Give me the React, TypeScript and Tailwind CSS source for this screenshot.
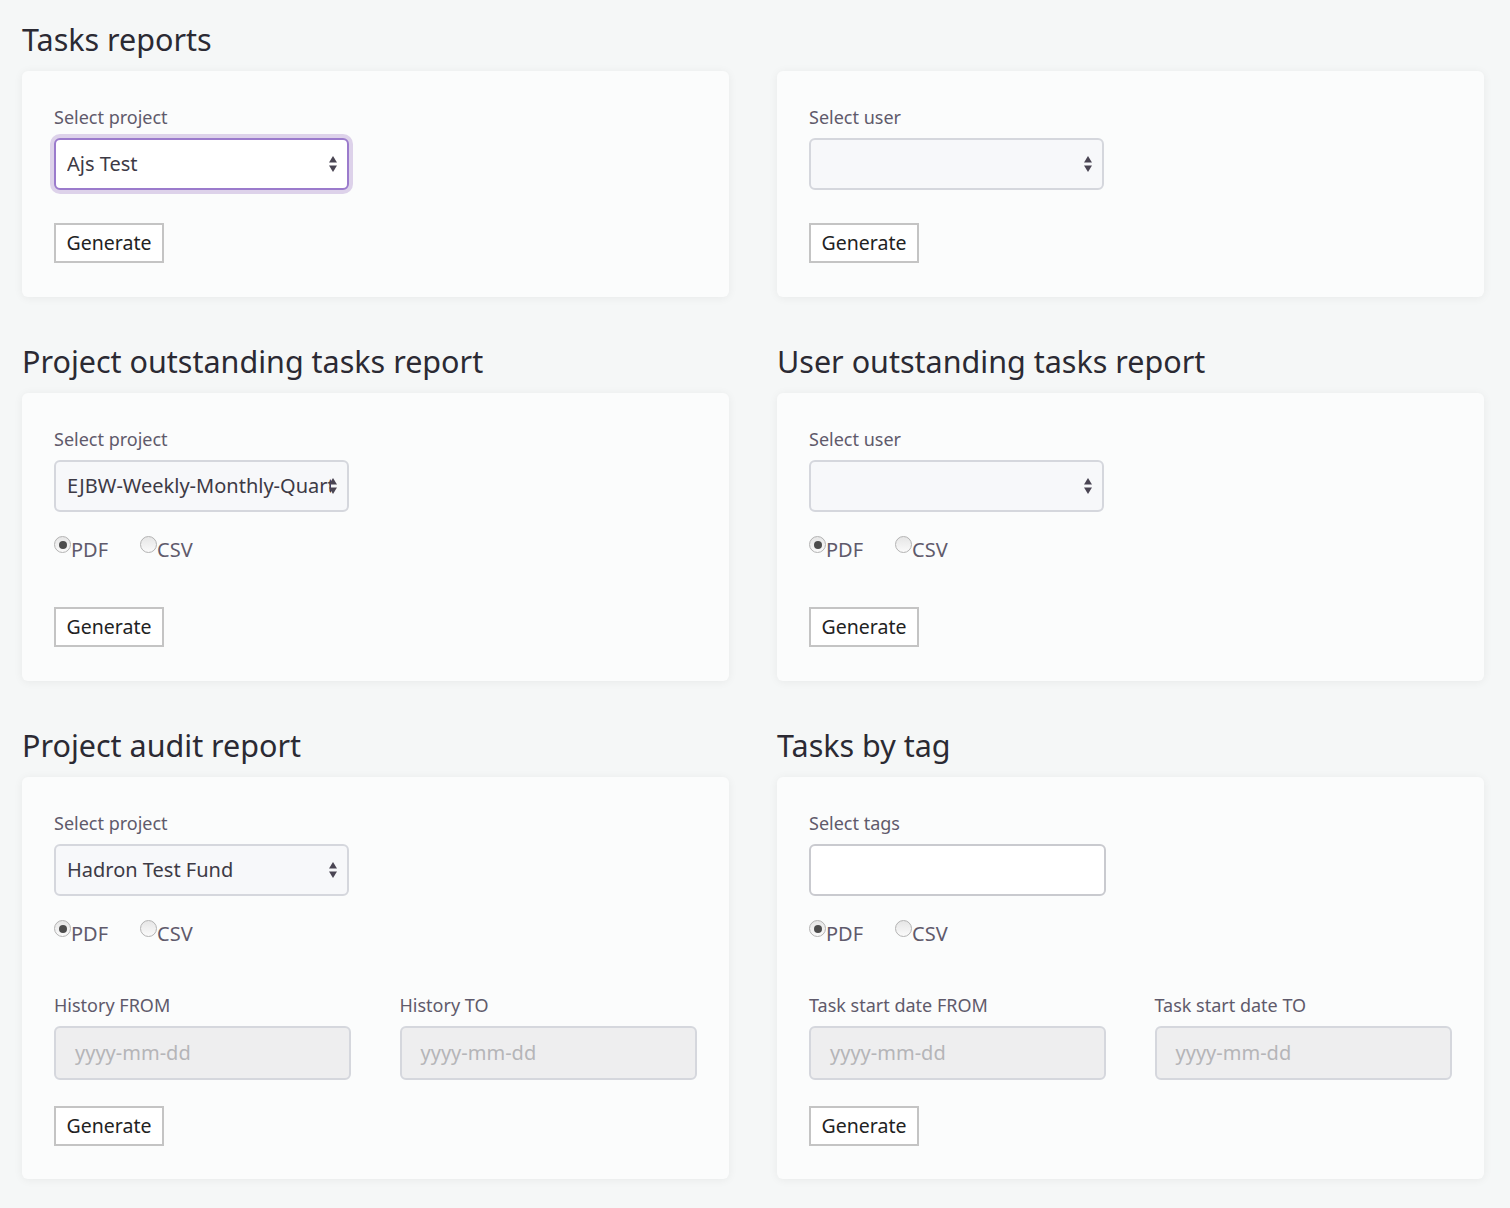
import React from "react";

const font = "font-['Noto_Sans','Open_Sans',sans-serif]";

const Arrows = () => (
  <svg width="10" height="18" viewBox="0 0 10 18" className="absolute right-[9px] top-1/2 -translate-y-1/2">
    <path d="M5 1 L9 7.5 H1 Z" fill="#4a4553" />
    <path d="M5 17 L9 10.5 H1 Z" fill="#4a4553" />
  </svg>
);

const Label = ({ children }: { children: React.ReactNode }) => (
  <div className="text-[18px] leading-[20px] text-[#5f5a6b] mb-[11px]">{children}</div>
);

const Select = ({ value, focused }: { value: string; focused?: boolean }) => (
  <div
    className={
      focused
        ? "relative w-[295px] h-[52px] rounded-[6px] border-2 border-[#9b7bcc] bg-white ring-4 ring-[#ddd2ea]"
        : "relative w-[295px] h-[52px] rounded-[6px] border-2 border-[#d5d7dd] bg-[#f7f8fa]"
    }
  >
    <div className="h-full flex items-center pl-[11px] pr-[16px]">
      <span className="block overflow-hidden whitespace-nowrap text-[20px] text-[#3d3a45]">{value}</span>
    </div>
    <Arrows />
  </div>
);

const Radio = ({ label, checked }: { label: string; checked?: boolean }) => (
  <div className="flex items-start">
    <span className="mt-[1px] w-[17px] h-[17px] rounded-full border border-[#b3b3b3] bg-gradient-to-b from-[#e6e6e6] to-[#fafafa] flex items-center justify-center">
      {checked && <span className="w-[8px] h-[8px] rounded-full bg-[#4d4d4d]" />}
    </span>
    <span className="mt-[4px] text-[20px] leading-[22px] text-[#5f5a6b]">{label}</span>
  </div>
);

const Radios = () => (
  <div className="flex gap-[32px] mt-[23px] h-[30px]">
    <Radio label="PDF" checked />
    <Radio label="CSV" />
  </div>
);

const Generate = () => (
  <button className="w-[110px] h-[40px] border-2 border-[#c4c4c4] bg-white text-[19.5px] text-[#222]">
    Generate
  </button>
);

const DateField = ({ label }: { label: string }) => (
  <div>
    <Label>{label}</Label>
    <div className="w-[297px] h-[54px] rounded-[6px] border-2 border-[#d5d7dd] bg-[#eeeeef] flex items-center pl-[19px] text-[20px] text-[#b5b5b8]">
      yyyy-mm-dd
    </div>
  </div>
);

const Card = ({ children, className }: { children: React.ReactNode; className?: string }) => (
  <div className={"bg-[#fbfcfc] rounded-[6px] shadow-[0_1px_10px_rgba(0,0,0,0.06)] pt-[36px] pl-[32px] pr-[32px] " + (className ?? "")}>
    {children}
  </div>
);

const Heading = ({ children }: { children: React.ReactNode }) => (
  <h2 className="text-[30.5px] leading-[36px] text-[#2b2a33] mb-[14px]">{children}</h2>
);

export default function App() {
  return (
    <div className={"min-h-screen bg-[#f5f7f7] pl-[22px] pr-[26px] pt-[21px] " + font}>
      <div className="grid grid-cols-2 gap-x-[48px]">
        {/* row 1 */}
        <div>
          <Heading>Tasks reports</Heading>
          <Card className="h-[226px]">
            <Label>Select project</Label>
            <Select value="Ajs Test" focused />
            <div className="mt-[33px]">
              <Generate />
            </div>
          </Card>
        </div>
        <div>
          <div className="h-[50px]" />
          <Card className="h-[226px]">
            <Label>Select user</Label>
            <Select value="" />
            <div className="mt-[33px]">
              <Generate />
            </div>
          </Card>
        </div>

        {/* row 2 */}
        <div className="mt-[46px]">
          <Heading>Project outstanding tasks report</Heading>
          <Card className="h-[288px]">
            <Label>Select project</Label>
            <Select value="EJBW-Weekly-Monthly-Quarterly" />
            <Radios />
            <div className="mt-[42px]">
              <Generate />
            </div>
          </Card>
        </div>
        <div className="mt-[46px]">
          <Heading>User outstanding tasks report</Heading>
          <Card className="h-[288px]">
            <Label>Select user</Label>
            <Select value="" />
            <Radios />
            <div className="mt-[42px]">
              <Generate />
            </div>
          </Card>
        </div>

        {/* row 3 */}
        <div className="mt-[46px]">
          <Heading>Project audit report</Heading>
          <Card className="h-[402px]">
            <Label>Select project</Label>
            <Select value="Hadron Test Fund" />
            <Radios />
            <div className="grid grid-cols-2 gap-x-[48px] mt-[46px]">
              <DateField label="History FROM" />
              <DateField label="History TO" />
            </div>
            <div className="mt-[26px]">
              <Generate />
            </div>
          </Card>
        </div>
        <div className="mt-[46px]">
          <Heading>Tasks by tag</Heading>
          <Card className="h-[402px]">
            <Label>Select tags</Label>
            <div className="w-[297px] h-[52px] rounded-[6px] border-2 border-[#c9cacf] bg-white" />
            <Radios />
            <div className="grid grid-cols-2 gap-x-[48px] mt-[46px]">
              <DateField label="Task start date FROM" />
              <DateField label="Task start date TO" />
            </div>
            <div className="mt-[26px]">
              <Generate />
            </div>
          </Card>
        </div>
      </div>
    </div>
  );
}
